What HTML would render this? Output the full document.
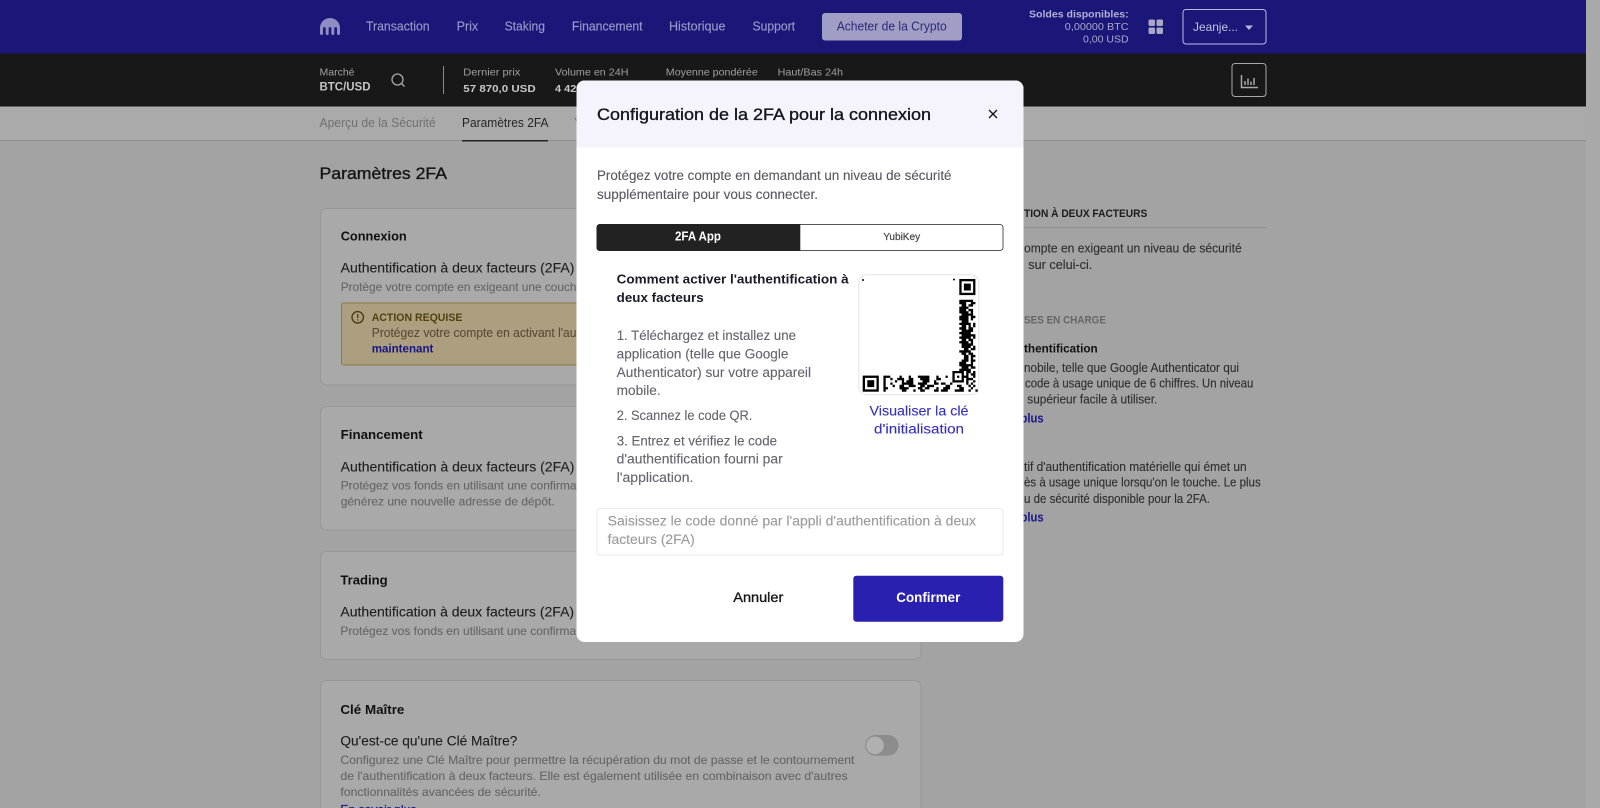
<!DOCTYPE html>
<html lang="fr"><head><meta charset="utf-8"><title>Configuration de la 2FA</title>
<style>
html,body{margin:0;padding:0;background:#a3a3a3;width:1600px;height:808px;overflow:hidden}
svg{display:block;filter:blur(.25px)}
text{font-family:"Liberation Sans",Arial,sans-serif;white-space:pre}
.b{font-weight:700}
.m{stroke:currentColor;stroke-width:.35}
</style></head><body>
<svg width="1600" height="808" viewBox="0 0 1600 808" xmlns="http://www.w3.org/2000/svg">
<g>
<rect width="1600" height="808" fill="#a3a3a3"/>
<rect x="1586" width="14" height="808" fill="#a9a9a9"/>
<rect width="1586" height="54" fill="#1a1778"/>
<rect y="53.5" width="1586" height="53" fill="#181818"/>
<rect y="106.5" width="1586" height="34" fill="#aaaaaa"/>
<rect y="140" width="1586" height="1" fill="#8f8f8f"/>

<path fill="#8f8dc2" d="M320 28a10 10 0 0 1 20 0v5.5a1.5 1.5 0 0 1-3 0v-5a1.33 1.33 0 0 0-2.67 0v5a1.5 1.5 0 0 1-3 0v-5a1.33 1.33 0 0 0-2.66 0v5a1.5 1.5 0 0 1-3 0v-5a1.33 1.33 0 0 0-2.67 0v5a1.5 1.5 0 0 1-3 0z"/>
<g font-size="12.5" fill="#9997c8" stroke="#9997c8" stroke-width=".15">
<text x="366" y="30.5" textLength="63.6" lengthAdjust="spacingAndGlyphs">Transaction</text>
<text x="456.6" y="30.5" textLength="21.6" lengthAdjust="spacingAndGlyphs">Prix</text>
<text x="504.6" y="30.5" textLength="40.4" lengthAdjust="spacingAndGlyphs">Staking</text>
<text x="571.9" y="30.5" textLength="70.7" lengthAdjust="spacingAndGlyphs">Financement</text>
<text x="669" y="30.5" textLength="56.5" lengthAdjust="spacingAndGlyphs">Historique</text>
<text x="752.5" y="30.5" textLength="42.5" lengthAdjust="spacingAndGlyphs">Support</text>
</g>
<rect x="822" y="13" width="140" height="27.5" rx="3" fill="#a09ec4"/>
<text x="836.7" y="30.5" font-size="12.5" fill="#2b2a78" textLength="110" lengthAdjust="spacingAndGlyphs">Acheter de la Crypto</text>
<text class="b" x="1029" y="17.5" font-size="10.5" fill="#b3b1d8" textLength="99.6" lengthAdjust="spacingAndGlyphs">Soldes disponibles:</text>
<text x="1064.8" y="30" font-size="10.5" fill="#a9a8ce" textLength="63.8" lengthAdjust="spacingAndGlyphs">0,00000 BTC</text>
<text x="1083" y="42.5" font-size="10.5" fill="#a9a8ce" textLength="45.6" lengthAdjust="spacingAndGlyphs">0,00 USD</text>
<g fill="#a8a7c9">
<rect x="1148.5" y="19.5" width="6.5" height="6.5" rx="1.5"/><rect x="1156.5" y="19.5" width="6.5" height="6.5" rx="1.5"/>
<rect x="1148.5" y="27.5" width="6.5" height="6.5" rx="1.5"/><rect x="1156.5" y="27.5" width="6.5" height="6.5" rx="1.5"/>
</g>
<rect x="1183" y="9.5" width="83" height="34.5" rx="3" fill="none" stroke="#bdbcdc"/>
<text x="1193" y="31" font-size="12" fill="#c5c4e0" textLength="45" lengthAdjust="spacingAndGlyphs">Jeanje...</text>
<path d="M1245 25.5h8l-4 4.5z" fill="#b8b7d8"/>

<g font-size="10.5" fill="#a0a0a0">
<text x="319.5" y="75.5" textLength="35" lengthAdjust="spacingAndGlyphs">Marché</text>
<text x="463.3" y="75.5" textLength="57" lengthAdjust="spacingAndGlyphs">Dernier prix</text>
<text x="555" y="75.5" textLength="73.5" lengthAdjust="spacingAndGlyphs">Volume en 24H</text>
<text x="665.8" y="75.5" textLength="92" lengthAdjust="spacingAndGlyphs">Moyenne pondérée</text>
<text x="777.6" y="75.5" textLength="65.4" lengthAdjust="spacingAndGlyphs">Haut/Bas 24h</text>
</g>
<text class="b" x="319.5" y="90.5" font-size="11.5" fill="#c4c4c4" textLength="51" lengthAdjust="spacingAndGlyphs">BTC/USD</text>
<g fill="none" stroke="#a5a5a5" stroke-width="1.3"><circle cx="397.5" cy="79.5" r="5.5"/><path d="M401.5 83.5l3 3"/></g>
<rect x="443" y="66" width="1" height="28" fill="#8a8a8a"/>
<text class="b" x="463.3" y="92" font-size="10.5" fill="#c8c8c8" textLength="72.4" lengthAdjust="spacingAndGlyphs">57 870,0 USD</text>
<text class="b" x="555" y="92" font-size="10.5" fill="#c8c8c8" textLength="21.4" lengthAdjust="spacingAndGlyphs">4 42</text>
<rect x="1232" y="63.5" width="34" height="33" rx="3" fill="none" stroke="#a8a8a8"/>
<path d="M1241.5 75v12.5H1258M1245 85v-4M1248 85v-6.5M1251 85v-3.500M1254 85v-7" fill="none" stroke="#a8a8a8" stroke-width="1.5"/>

<text x="319.5" y="126.8" font-size="12.5" fill="#707070" textLength="116.2" lengthAdjust="spacingAndGlyphs">Aperçu de la Sécurité</text>
<text x="462" y="126.8" font-size="12.5" fill="#262626" textLength="86.5" lengthAdjust="spacingAndGlyphs">Paramètres 2FA</text>
<rect x="462" y="140" width="86" height="1.5" fill="#222"/>
<text class="m" x="319.5" y="179" font-size="17" fill="#141414" color="#141414" textLength="127.5" lengthAdjust="spacingAndGlyphs">Paramètres 2FA</text>

<g fill="#a9a9a9" stroke="#979797">
<rect x="320.5" y="208.5" width="600.5" height="176.5" rx="6"/>
<rect x="320.5" y="406.5" width="600.5" height="123.5" rx="6"/>
<rect x="320.5" y="551.5" width="600.5" height="108" rx="6"/>
<rect x="320.5" y="680.5" width="600.5" height="160" rx="6"/>
</g>

<g class="b" font-size="13" fill="#111">
<text x="340.7" y="240.7" textLength="66" lengthAdjust="spacingAndGlyphs">Connexion</text>
<text x="340.7" y="439" textLength="82" lengthAdjust="spacingAndGlyphs">Financement</text>
<text x="340.4" y="584.6" textLength="47.3" lengthAdjust="spacingAndGlyphs">Trading</text>
<text x="340.4" y="713.9" textLength="64" lengthAdjust="spacingAndGlyphs">Clé Maître</text>
</g>
<g font-size="13.5" fill="#1e1e1e" stroke="#1e1e1e" stroke-width=".12">
<text x="340.7" y="272.5" textLength="233.7" lengthAdjust="spacingAndGlyphs">Authentification à deux facteurs (2FA)</text>
<text x="340.7" y="471.4" textLength="233.7" lengthAdjust="spacingAndGlyphs">Authentification à deux facteurs (2FA)</text>
<text x="340.4" y="616.4" textLength="233.7" lengthAdjust="spacingAndGlyphs">Authentification à deux facteurs (2FA)</text>
<text x="340.4" y="745.7" textLength="177" lengthAdjust="spacingAndGlyphs">Qu'est-ce qu'une Clé Maître?</text>
</g>
<g font-size="12" fill="#666" stroke="#666" stroke-width=".12">
<text x="340.7" y="291" textLength="235.8" lengthAdjust="spacingAndGlyphs">Protège votre compte en exigeant une couch</text>
<text x="340.7" y="489.4" textLength="235.8" lengthAdjust="spacingAndGlyphs">Protégez vos fonds en utilisant une confirma</text>
<text x="340.7" y="505.4" textLength="214" lengthAdjust="spacingAndGlyphs">générez une nouvelle adresse de dépôt.</text>
<text x="340.4" y="634.9" textLength="235.8" lengthAdjust="spacingAndGlyphs">Protégez vos fonds en utilisant une confirma</text>
<text x="340.4" y="764.2" textLength="514" lengthAdjust="spacingAndGlyphs">Configurez une Clé Maître pour permettre la récupération du mot de passe et le contournement</text>
<text x="340.4" y="780.2" textLength="507.3" lengthAdjust="spacingAndGlyphs">de l'authentification à deux facteurs. Elle est également utilisée en combinaison avec d'autres</text>
<text x="340.4" y="795.9" textLength="200.4" lengthAdjust="spacingAndGlyphs">fonctionnalités avancées de sécurité.</text>
</g>
<text x="340.4" y="813.5" font-size="12" fill="#1a1585" stroke="#1a1585" stroke-width=".2" textLength="76" lengthAdjust="spacingAndGlyphs">En savoir plus</text>
<rect x="865" y="735" width="33.4" height="20.7" rx="10.35" fill="#8c8c8c"/>
<circle cx="875" cy="745.4" r="8.8" fill="#b0b0b0"/>

<rect x="341.5" y="303" width="420" height="62" rx="2" fill="#ab9f80" stroke="#8f7a45"/>
<circle cx="357.7" cy="317.3" r="5.7" fill="none" stroke="#4c3d10" stroke-width="1.4"/>
<path d="M357.7 314v4M357.7 319.3v1.300" stroke="#4c3d10" stroke-width="1.3" fill="none"/>
<text class="b" x="371.7" y="320.8" font-size="11" fill="#51420f" textLength="90.7" lengthAdjust="spacingAndGlyphs">ACTION REQUISE</text>
<text x="371.7" y="337.2" font-size="12.5" fill="#5a4f30" stroke="#5a4f30" stroke-width=".12" textLength="204.8" lengthAdjust="spacingAndGlyphs">Protégez votre compte en activant l'au</text>
<text class="b" x="371.7" y="352.7" font-size="12" fill="#1a1585" textLength="61.7" lengthAdjust="spacingAndGlyphs">maintenant</text>
<text x="574" y="126.8" font-size="12.5" fill="#707070">Y</text>

<text class="b" x="1024" y="217" font-size="11" fill="#1c1c1c" textLength="123.3" lengthAdjust="spacingAndGlyphs">TION À DEUX FACTEURS</text>
<rect x="960" y="227" width="306.7" height="1" fill="#8f8f8f"/>
<g font-size="12.5" fill="#2e2e2e" stroke="#2e2e2e" stroke-width=".12">
<text x="1024" y="252.5" textLength="217.7" lengthAdjust="spacingAndGlyphs">ompte en exigeant un niveau de sécurité</text>
<text x="1028.3" y="269.2" textLength="64" lengthAdjust="spacingAndGlyphs">sur celui-ci.</text>
<text x="1024" y="371.8" textLength="215" lengthAdjust="spacingAndGlyphs">nobile, telle que Google Authenticator qui</text>
<text x="1025" y="387.5" textLength="228.3" lengthAdjust="spacingAndGlyphs">code à usage unique de 6 chiffres. Un niveau</text>
<text x="1027.3" y="403.5" textLength="130" lengthAdjust="spacingAndGlyphs">supérieur facile à utiliser.</text>
<text x="1024" y="470.8" textLength="222.7" lengthAdjust="spacingAndGlyphs">tif d'authentification matérielle qui émet un</text>
<text x="1024" y="486.5" textLength="236.7" lengthAdjust="spacingAndGlyphs">ès à usage unique lorsqu'on le touche. Le plus</text>
<text x="1024" y="503.1" textLength="186" lengthAdjust="spacingAndGlyphs">u de sécurité disponible pour la 2FA.</text>
</g>
<text class="b" x="1024" y="323.7" font-size="11" fill="#666" textLength="82" lengthAdjust="spacingAndGlyphs">SES EN CHARGE</text>
<text class="b" x="1024" y="352.5" font-size="12" fill="#111" textLength="73.7" lengthAdjust="spacingAndGlyphs">thentification</text>
<text class="b" x="1020.5" y="422.5" font-size="12.5" fill="#1a1585" textLength="23.1" lengthAdjust="spacingAndGlyphs">plus</text>
<text class="b" x="1020.5" y="521.5" font-size="12.5" fill="#1a1585" textLength="23.1" lengthAdjust="spacingAndGlyphs">plus</text>

<!-- Modal -->
<rect x="576.5" y="80.5" width="447" height="561.5" rx="8" fill="#fff"/>
<path d="M576.5 147.5V88.5a8 8 0 0 1 8-8h431a8 8 0 0 1 8 8v59z" fill="#f5f4fd"/>
<text class="m" x="597" y="120" font-size="16.5" fill="#16161f" color="#16161f" textLength="334" lengthAdjust="spacingAndGlyphs">Configuration de la 2FA pour la connexion</text>
<path d="M989 110l8 8M997 110l-8 8" stroke="#111" stroke-width="1.3" fill="none"/>
<g font-size="13.5" fill="#595862" stroke="#595862" stroke-width=".12">
<text x="597" y="180.2" textLength="354.5" lengthAdjust="spacingAndGlyphs">Protégez votre compte en demandant un niveau de sécurité</text>
<text x="597" y="199.2" textLength="221" lengthAdjust="spacingAndGlyphs">supplémentaire pour vous connecter.</text>
</g>
<rect x="597" y="224.5" width="406" height="26" rx="3" fill="#fff" stroke="#555"/>
<path d="M800.3 224H600a3.500 3.500 0 0 0-3.500 3.500v20a3.500 3.500 0 0 0 3.500 3.500h200.300z" fill="#222"/>
<text class="b" x="675" y="240.5" font-size="12.5" fill="#fff" textLength="46" lengthAdjust="spacingAndGlyphs">2FA App</text>
<text x="883.2" y="240" font-size="10.5" fill="#444" color="#444" stroke="#444" stroke-width=".2" textLength="37" lengthAdjust="spacingAndGlyphs">YubiKey</text>

<text class="b" x="616.7" y="283.5" font-size="13" fill="#1a1a28" textLength="232" lengthAdjust="spacingAndGlyphs">Comment activer l'authentification à</text>
<text class="b" x="616.7" y="301.8" font-size="13" fill="#1a1a28" textLength="87" lengthAdjust="spacingAndGlyphs">deux facteurs</text>
<g font-size="13.5" fill="#64636e" stroke="#64636e" stroke-width=".12">
<text x="616.7" y="340.2" textLength="179.3" lengthAdjust="spacingAndGlyphs">1. Téléchargez et installez une</text>
<text x="616.7" y="358.5" textLength="171.7" lengthAdjust="spacingAndGlyphs">application (telle que Google</text>
<text x="616.7" y="377.1" textLength="194.3" lengthAdjust="spacingAndGlyphs">Authenticator) sur votre appareil</text>
<text x="616.7" y="395.1" textLength="44" lengthAdjust="spacingAndGlyphs">mobile.</text>
<text x="616.7" y="420.2" textLength="135.7" lengthAdjust="spacingAndGlyphs">2. Scannez le code QR.</text>
<text x="616.7" y="445.5" textLength="160.3" lengthAdjust="spacingAndGlyphs">3. Entrez et vérifiez le code</text>
<text x="616.7" y="463.5" textLength="166" lengthAdjust="spacingAndGlyphs">d'authentification fourni par</text>
<text x="616.7" y="482.1" textLength="76.7" lengthAdjust="spacingAndGlyphs">l'application.</text>
</g>

<rect x="858.8" y="274.8" width="120" height="120" rx="8" fill="#fff" stroke="#e4e4e4"/>
<circle cx="863" cy="280" r="1" fill="#000"/><circle cx="954" cy="279.5" r="1" fill="#000"/>
<g transform="translate(862.7 279) scale(2.3)">
<rect x="42.5" y=".5" width="6" height="6" fill="none" stroke="#000"/><rect x="44" y="2" width="3" height="3"/>
<rect x=".5" y="42.5" width="6" height="6" fill="none" stroke="#000"/><rect x="2" y="44" width="3" height="3"/>
<path fill="none" stroke="#000" d="M42 9.5h6M42 10.5h3m2 0h2M43 11.500h2m1 0h2M42 12.500h4M42 13.500h3m1 0h2M42 14.500h4m1 0h1M43 15.500h5M42 16.500h4m1 0h2M42 17.500h4m1 0h1M43 18.500h3M42 19.500h5m1 0h1M43 20.500h2m1 0h1m1 0h1M42 21.500h3m1 0h2M43 22.500h5M42 23.500h5M43 24.500h6M42 25.500h5m1 0h1M43 26.500h2m1 0h2M42 27.500h4m1 0h1M43 28.500h5M43 29.500h4m1 0h1M44 30.500h2m1 0h2M42 31.500h5M43 32.500h2m1 0h2M44 33.500h2m1 0h2M44 34.500h2m1 0h1M43 35.500h3m1 0h2M42 36.500h3m2 0h1M42 37.500h6M43 38.500h3m1 0h2M42 39.500h5M39 40.500h5m1 0h2m1 0h1M39 41.500h1m3 0h1m1 0h1m1 0h2M39 42.500h1m1 0h1m1 0h3m2 0h1M39 43.500h1m3 0h1m1 0h3M39 44.500h5m1 0h1m2 0h1M38 45.500h1m6 0h1m1 0h1M36 46.500h2m3 0h2m3 0h1m1 0h1M9 42.500h3m4 0h1m3 0h1m3 0h5m3 0h1m3 0h1M9 43.500h1m2 0h1m2 0h3m2 0h2m3 0h4m3 0h2M9 44.500h1m4 0h1m2 0h1m1 0h3m4 0h3m2 0h1M9 45.500h1m2 0h1m4 0h5m2 0h4m3 0h2m1 0h2M9 46.500h1m3 0h1m2 0h2m2 0h3m2 0h2m1 0h3M9 47.500h2m5 0h4m4 0h2m1 0h2m3 0h1m2 0h3m4 0h2m3 0h1M9 48.500h1m7 0h2m3 0h1m2 0h2m4 0h2m1 0h3m3 0h4m2 0h1m2 0h1"/>
</g>

<g font-size="13.5" fill="#3430bd" stroke="#3430bd" stroke-width=".12">
<text x="869.5" y="415.3" textLength="99" lengthAdjust="spacingAndGlyphs">Visualiser la clé</text>
<text x="874" y="433.6" textLength="90" lengthAdjust="spacingAndGlyphs">d'initialisation</text>
</g>

<rect x="597" y="508.5" width="406" height="46.5" rx="3" fill="#fff" stroke="#ebebeb"/>
<g font-size="13.5" fill="#9a9a9a" stroke="#9a9a9a" stroke-width=".12">
<text x="607.7" y="525.5" textLength="368.3" lengthAdjust="spacingAndGlyphs">Saisissez le code donné par l'appli d'authentification à deux</text>
<text x="607.7" y="543.8" textLength="87" lengthAdjust="spacingAndGlyphs">facteurs (2FA)</text>
</g>
<text class="m" x="733.3" y="602" font-size="13.5" fill="#171717" color="#171717" textLength="50" lengthAdjust="spacingAndGlyphs">Annuler</text>
<rect x="853.3" y="575.7" width="150" height="46" rx="3" fill="#2a20b0"/>
<text class="b" x="896.3" y="602" font-size="13.5" fill="#fff" textLength="64" lengthAdjust="spacingAndGlyphs">Confirmer</text>
</g>
</svg>
</body></html>
